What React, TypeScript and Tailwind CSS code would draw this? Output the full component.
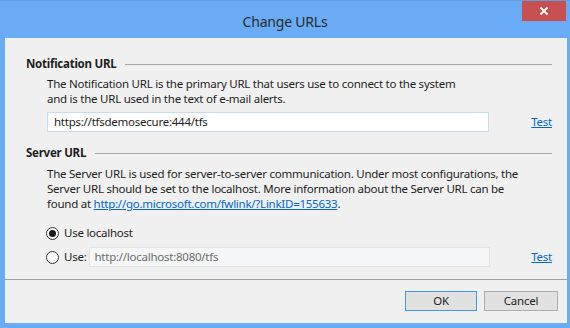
import React from "react";

const Radio = ({ checked }: { checked?: boolean }) => (
  <span className="w-[13px] h-[13px] rounded-full border border-[#333] bg-white flex items-center justify-center shrink-0">
    {checked && <span className="w-[7px] h-[7px] rounded-full bg-[#1a1a1a]" />}
  </span>
);

const SectionHeading = ({ title }: { title: string }) => (
  <div className="flex items-center h-[16px]">
    <span className="font-bold text-[#1e1e1e]">{title}</span>
    <span className="flex-1 h-px bg-[#a8a8a8] ml-[9px] mt-[1px]" />
  </div>
);

const TestLink = () => (
  <a className="text-[#0066cc] underline ml-auto" href="#">
    Test
  </a>
);

const App = () => {
  return (
    <div
      className="w-[570px] h-[328px] bg-[#69acf5] flex flex-col text-[11.5px] tracking-[-0.25px] text-[#1e1e1e]"
      style={{ fontFamily: '"Noto Sans", "Open Sans", sans-serif' }}
    >
      {/* title bar */}
      <div className="relative h-[38px] shrink-0 border-t border-[#5f9de0] flex items-center justify-center">
        <span className="text-[14px] tracking-[-0.2px] text-[#2b2b2b] mt-[4px]">Change URLs</span>
        <button className="absolute right-[4px] top-0 w-[44px] h-[20px] bg-[#c75050] text-white flex items-center justify-center">
          <svg width="10" height="10" viewBox="0 0 10 10">
            <path d="M1.5 1.5 L8.5 8.5 M8.5 1.5 L1.5 8.5" stroke="white" strokeWidth="1.8" />
          </svg>
        </button>
      </div>

      <div className="flex-1 ml-[5px] mr-[3px] mb-[5px] bg-[#f0f0f0] flex flex-col">
        <div className="pl-[21px] pr-[15px] pt-[18px]">
          <SectionHeading title="Notification URL" />
          <div className="pl-[21px] mt-[4px] leading-[15px] whitespace-nowrap">
            The Notification URL is the primary URL that users use to connect to the system
            <br />
            and is the URL used in the text of e-mail alerts.
          </div>
          <div className="pl-[21px] mt-[6px] flex items-center">
            <div className="w-[442px] h-[20px] bg-white border border-[#c5dcf3] flex items-center px-[6px]">
              https://tfsdemosecure:444/tfs
            </div>
            <TestLink />
          </div>

          <div className="mt-[13px]">
            <SectionHeading title="Server URL" />
          </div>
          <div className="pl-[21px] mt-[5px] leading-[15px] whitespace-nowrap">
            The Server URL is used for server-to-server communication. Under most configurations, the
            <br />
            Server URL should be set to the localhost. More information about the Server URL can be
            <br />
            found at{" "}
            <a className="text-[#0066cc] underline" href="#">
              http://go.microsoft.com/fwlink/?LinkID=155633
            </a>
            .
          </div>
          <div className="pl-[20px] mt-[12px] flex items-center h-[20px] gap-[5px]">
            <Radio checked />
            <span>Use localhost</span>
          </div>
          <div className="pl-[20px] mt-[4px] flex items-center h-[20px]">
            <Radio />
            <span className="ml-[5px]">Use:</span>
            <div className="ml-[3px] w-[401px] h-[20px] bg-[#f5f6f8] border border-[#e3e3e3] flex items-center px-[4px] text-[#6d6d6d]">
              http://localhost:8080/tfs
            </div>
            <TestLink />
          </div>
        </div>

        <div className="mt-[12px] h-px bg-[#a0a0a0]" />

        <div className="flex justify-end gap-[7px] pr-[9px] pt-[11px]">
          <button className="w-[72px] h-[20px] bg-[#e1e1e1] border border-[#3c9bf0] text-[#1e1e1e]">
            OK
          </button>
          <button className="w-[74px] h-[20px] bg-[#e1e1e1] border border-[#adadad] text-[#1e1e1e]">
            Cancel
          </button>
        </div>
      </div>
    </div>
  );
};

export default App;
